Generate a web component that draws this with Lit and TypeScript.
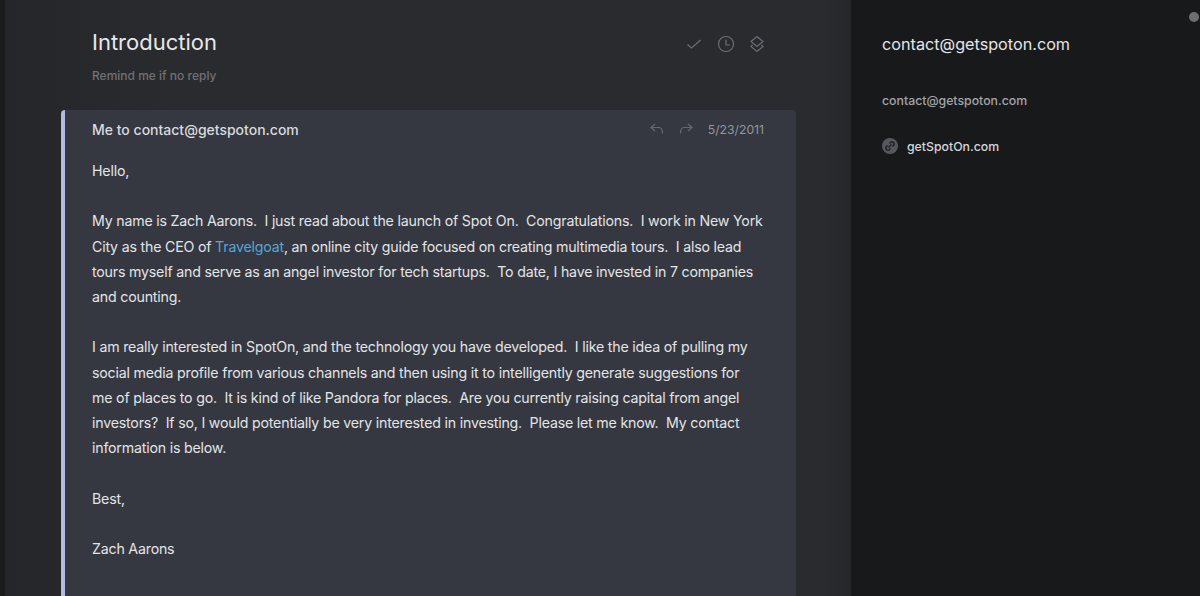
import { LitElement, css, html } from 'lit';
import { customElement } from 'lit/decorators.js';

@customElement('app-root')
export class AppRoot extends LitElement {
  static styles = css`
:host {
  display: flex;
  height: 596px;
  overflow: hidden;
  font-family: Inter, "Liberation Sans", sans-serif;
  color: #e3e4e6;
  background: #18191b;
}
.rail {
  width: 5px;
  flex: none;
  background: #1a1b1d;
}
.main {
  width: 846px;
  flex: none;
  box-sizing: border-box;
  padding: 0 55px 0 56px;
  background: linear-gradient(90deg, #25262a, #2a2b2f 20%, #2a2b2f 97%, #26272a);
}
.head {
  height: 110px;
  box-sizing: border-box;
  padding: 27px 31px 0 31px;
  display: flex;
  justify-content: space-between;
}
.title {
  font-size: 22px;
  line-height: 30px;
  font-weight: 400;
  color: #e6e7e9;
}
.remind {
  margin-top: 11px;
  font-size: 12px;
  line-height: 16px;
  font-weight: 500;
  color: #6f7175;
}
.actions {
  display: flex;
  gap: 14px;
  align-items: center;
  height: 34px;
  color: #6c6e73;
}
.card {
  height: 486px;
  box-sizing: border-box;
  border-left: 4px solid #b5b9e2;
  border-radius: 4px 4px 0 0;
  background: #353841;
  padding: 0 32px 0 27px;
}
.card-head {
  height: 38px;
  display: flex;
  align-items: center;
  font-size: 14px;
  font-weight: 500;
  color: #d9dadd;
}
.from {
  margin-right: auto;
}
.reply {
  color: #656872;
  margin-right: 15px;
}
.date {
  font-size: 12.2px;
  font-weight: 400;
  color: #94969c;
}
.body {
  margin: 10px 0 0;
  font-size: 14.2px;
  letter-spacing: -0.2px;
  line-height: 25.2px;
  white-space: pre;
  color: #e3e4e6;
}
a {
  color: #56a5d8;
  text-decoration: none;
}
.side {
  flex: 1;
  padding: 33px 31px;
  background: #18191b;
  position: relative;
}
.side-title {
  font-size: 16.2px;
  line-height: 22px;
  color: #e4e5e7;
}
.side-mail {
  margin-top: 38px;
  font-size: 12.3px;
  line-height: 16px;
  font-weight: 500;
  color: #a2a4a8;
}
.site {
  margin-top: 29px;
  display: flex;
  align-items: center;
  gap: 9px;
  font-size: 12.3px;
  font-weight: 500;
  color: #d4d5d8;
}
.link-icon {
  width: 16px;
  height: 16px;
  border-radius: 50%;
  background: #56585e;
  display: flex;
  align-items: center;
  justify-content: center;
  color: #1d1e20;
}
.link-icon svg {
  stroke-width: 1.4;
}
.dot {
  position: absolute;
  left: 338px;
  top: 12px;
  width: 10px;
  height: 10px;
  border-radius: 50%;
  background: #6d6e70;
}
svg {
  display: block;
  fill: none;
  stroke: currentColor;
  stroke-width: 1.2;
}
`;

  render() {
    return html`
<div class="rail"></div>
<div class="main">
  <div class="head">
    <div>
      <div class="title">Introduction</div>
      <div class="remind">Remind me if no reply</div>
    </div>
    <div class="actions">
      <svg width="16" height="16" viewBox="0 0 16 16"><path d="M0.5 8.5l4 3.5 9-8"/></svg>
      <svg width="18" height="18" viewBox="0 0 18 18"><circle cx="9" cy="9" r="7.5"/><path d="M9 4.5V10h4"/></svg>
      <svg width="16" height="18" viewBox="0 0 16 18"><path d="M8 1.5l6 5-6 5-6-5zM3.5 10L2 11.5l6 5 6-5-1.5-1.5"/></svg>
    </div>
  </div>
  <div class="card">
    <div class="card-head">
      <span class="from">Me to contact@getspoton.com</span>
      <svg class="reply" width="14" height="12" viewBox="0 0 14 12"><path d="M5 1L1 4.5 5 8M1 4.5h8c2 0 3.500 2 3.500 6"/></svg>
      <svg class="reply" width="14" height="12" viewBox="0 0 14 12"><path d="M9 1l4 3.500L9 8M13 4.500H5c-2 0-3.500 2-3.500 6"/></svg>
      <span class="date">5/23/2011</span>
    </div>
    <div class="body">Hello,

My name is Zach Aarons.  I just read about the launch of Spot On.  Congratulations.  I work in New York
City as the CEO of <a>Travelgoat</a>, an online city guide focused on creating multimedia tours.  I also lead
tours myself and serve as an angel investor for tech startups.  To date, I have invested in 7 companies
and counting.

I am really interested in SpotOn, and the technology you have developed.  I like the idea of pulling my
social media profile from various channels and then using it to intelligently generate suggestions for
me of places to go.  It is kind of like Pandora for places.  Are you currently raising capital from angel
investors?  If so, I would potentially be very interested in investing.  Please let me know.  My contact
information is below.

Best,

Zach Aarons</div>
  </div>
</div>
<div class="side">
  <div class="dot"></div>
  <div class="side-title">contact@getspoton.com</div>
  <div class="side-mail">contact@getspoton.com</div>
  <div class="site">
    <span class="link-icon">
      <svg width="12" height="12" viewBox="0 0 12 12"><path d="M5.500 3.500l1-1a2.100 2.100 0 0 1 3 3l-1 1M6.500 8.500l-1 1a2.100 2.100 0 0 1-3-3l1-1M4.500 7.500l3-3"/></svg>
    </span>
    <span>getSpotOn.com</span>
  </div>
</div>
`;
  }
}
